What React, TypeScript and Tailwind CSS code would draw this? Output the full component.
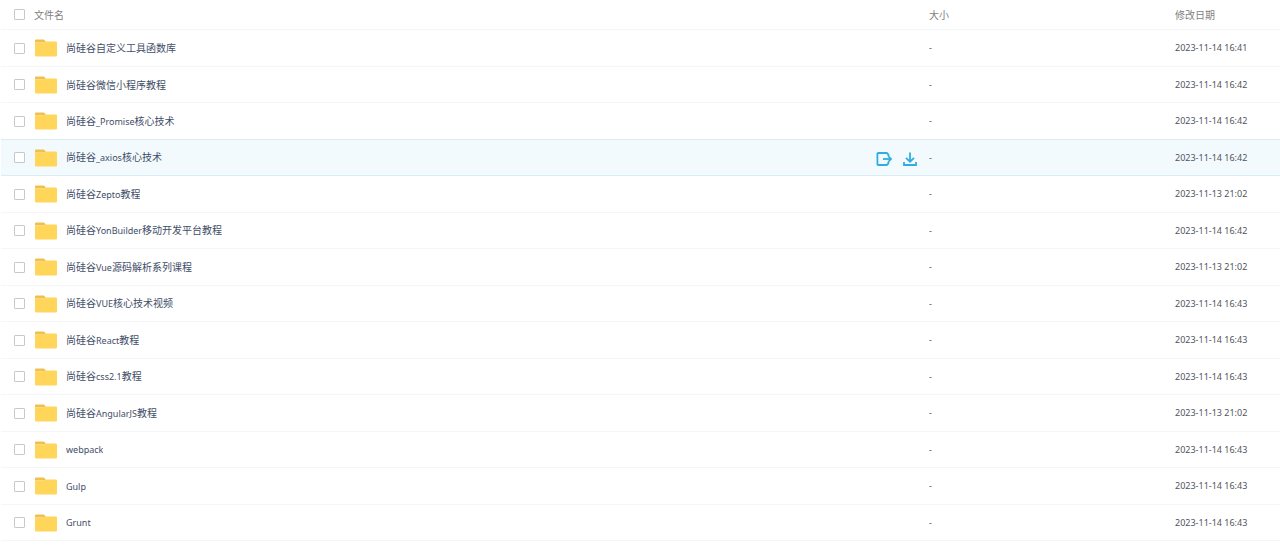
import React, { useState } from 'react';

// ============================================
// Types & Data
// ============================================

interface FileEntry {
  name: string;
  size: string;
  modifiedAt: string;
}

const files: FileEntry[] = [
  { name: '尚硅谷自定义工具函数库', size: '-', modifiedAt: '2023-11-14 16:41' },
  { name: '尚硅谷微信小程序教程', size: '-', modifiedAt: '2023-11-14 16:42' },
  { name: '尚硅谷_Promise核心技术', size: '-', modifiedAt: '2023-11-14 16:42' },
  { name: '尚硅谷_axios核心技术', size: '-', modifiedAt: '2023-11-14 16:42' },
  { name: '尚硅谷Zepto教程', size: '-', modifiedAt: '2023-11-13 21:02' },
  { name: '尚硅谷YonBuilder移动开发平台教程', size: '-', modifiedAt: '2023-11-14 16:42' },
  { name: '尚硅谷Vue源码解析系列课程', size: '-', modifiedAt: '2023-11-13 21:02' },
  { name: '尚硅谷VUE核心技术视频', size: '-', modifiedAt: '2023-11-14 16:43' },
  { name: '尚硅谷React教程', size: '-', modifiedAt: '2023-11-14 16:43' },
  { name: '尚硅谷css2.1教程', size: '-', modifiedAt: '2023-11-14 16:43' },
  { name: '尚硅谷AngularJS教程', size: '-', modifiedAt: '2023-11-13 21:02' },
  { name: 'webpack', size: '-', modifiedAt: '2023-11-14 16:43' },
  { name: 'Gulp', size: '-', modifiedAt: '2023-11-14 16:43' },
  { name: 'Grunt', size: '-', modifiedAt: '2023-11-14 16:43' },
];

// ============================================
// Icons
// ============================================

function FolderIcon() {
  return (
    <svg className="h-[18px] w-[22px] shrink-0" viewBox="0 0 22 18" aria-hidden="true">
      <path d="M0 1.5Q0 0.5 1 0.5H8.5Q9.5 0.5 9.8 1.2L11 3.5H0Z" fill="#efc050" />
      <path d="M0 3.6H9L10.2 2.4H20.8Q22 2.4 22 3.6V16.3Q22 17.5 20.8 17.5H1.2Q0 17.5 0 16.3Z" fill="#ffd65a" />
    </svg>
  );
}

function ShareIcon() {
  return (
    <svg className="h-4 w-4" viewBox="0 0 16 16" fill="none" stroke="#2fade3" strokeWidth="1.8" aria-hidden="true">
      <path d="M12.4 5V3.6L10.8 2H2.4Q1.4 2 1.4 3V13Q1.4 14 2.4 14H10.8L12.4 12.4V11" />
      <path d="M7 8H15" />
      <path d="M12.2 5L15 8L12.2 11" />
    </svg>
  );
}

function DownloadIcon() {
  return (
    <svg className="h-4 w-4" viewBox="0 0 16 16" fill="none" stroke="#2fade3" strokeWidth="1.8" aria-hidden="true">
      <path d="M8 1.5V10.5" />
      <path d="M4 6.8L8 10.7L12 6.8" />
      <path d="M2 11V14H14V11" />
    </svg>
  );
}

// ============================================
// Checkbox & Name
// ============================================

interface CheckboxProps {
  label: string;
  checked: boolean;
  onChange: () => void;
}

function Checkbox({ label, checked, onChange }: CheckboxProps) {
  return (
    <input
      type="checkbox"
      aria-label={label}
      checked={checked}
      onChange={onChange}
      className="block h-[11px] w-[11px] shrink-0 cursor-pointer appearance-none rounded-[1px] border border-[#c6c9ce] bg-white checked:border-[#2fade3] checked:bg-[#2fade3]"
    />
  );
}

// Latin runs are set one step smaller than the Chinese around them
function FileName({ name }: { name: string }) {
  const parts = name.split(/([\x20-\x7e]+)/).filter(Boolean);

  return (
    <a href="#" className="truncate text-[10px] leading-4 text-[#424e67]">
      {parts.map((part, index) => (
        <span key={index} className={/^[\x20-\x7e]/.test(part) ? 'text-[9px]' : ''}>
          {part}
        </span>
      ))}
    </a>
  );
}

// ============================================
// File Row
// ============================================

interface FileRowProps {
  file: FileEntry;
  active: boolean;
  selected: boolean;
  beforeActive: boolean;
  onToggle: () => void;
  onHover: () => void;
}

function FileRow({ file, active, selected, beforeActive, onToggle, onHover }: FileRowProps) {
  const border = active || beforeActive ? 'border-[#d9edf6]' : 'border-[#f5f6f8]';

  return (
    <tr className={`h-9 odd:h-[37px] ${active ? 'bg-[#f3fafe]' : 'bg-white'}`} onMouseEnter={onHover}>
      <td className={`border-b p-0 ${border}`}>
        <div className="flex items-center pl-[13px] pr-[11px]">
          <Checkbox label={file.name} checked={selected} onChange={onToggle} />
          <div className="ml-[10px] flex min-w-0 flex-1 items-center gap-[9px]">
            <FolderIcon />
            <FileName name={file.name} />
          </div>
          {active && (
            <div className="flex items-center gap-[10px] pt-[2px]">
              <button type="button" aria-label="分享" className="cursor-pointer">
                <ShareIcon />
              </button>
              <button type="button" aria-label="下载" className="cursor-pointer">
                <DownloadIcon />
              </button>
            </div>
          )}
        </div>
      </td>
      <td className={`border-b p-0 text-[9px] ${border}`}>{file.size}</td>
      <td className={`border-b p-0 text-[9px] whitespace-nowrap ${border}`}>{file.modifiedAt}</td>
    </tr>
  );
}

// ============================================
// App
// ============================================

export default function App() {
  const [selected, setSelected] = useState<string[]>([]);
  const [activeIndex, setActiveIndex] = useState(3);

  const allSelected = selected.length === files.length;

  const toggle = (name: string) => {
    setSelected((prev) => (prev.includes(name) ? prev.filter((n) => n !== name) : [...prev, name]));
  };

  return (
    <main className="min-h-screen bg-white pl-px font-['Noto_Sans','Noto_Sans_CJK_SC',sans-serif] leading-4 text-[#50545c]">
      <table className="w-full table-fixed border-separate border-spacing-0 text-left">
        <colgroup>
          <col />
          <col className="w-[246px]" />
          <col className="w-[105px]" />
        </colgroup>
        <thead>
          <tr className="h-[30px] text-[10px] text-[#818181]">
            <th className="border-b border-[#f5f6f8] p-0 font-normal">
              <div className="flex items-center gap-[9px] pl-[13px]">
                <Checkbox
                  label="全选"
                  checked={allSelected}
                  onChange={() => setSelected(allSelected ? [] : files.map((f) => f.name))}
                />
                文件名
              </div>
            </th>
            <th className="border-b border-[#f5f6f8] p-0 font-normal">大小</th>
            <th className="border-b border-[#f5f6f8] p-0 font-normal">修改日期</th>
          </tr>
        </thead>
        <tbody>
          {files.map((file, index) => (
            <FileRow
              key={file.name}
              file={file}
              active={index === activeIndex}
              beforeActive={index === activeIndex - 1}
              selected={selected.includes(file.name)}
              onToggle={() => toggle(file.name)}
              onHover={() => setActiveIndex(index)}
            />
          ))}
        </tbody>
      </table>
    </main>
  );
}
